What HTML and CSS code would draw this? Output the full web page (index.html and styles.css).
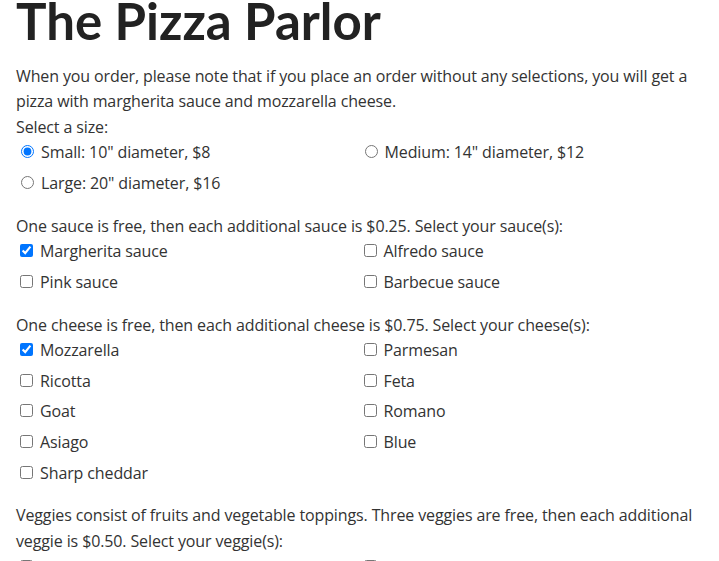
FILE: index.html
```html
<!DOCTYPE html>
<html lang="en">
<head>
<meta charset="utf-8">
<title>The Pizza Parlor</title>
<link rel="stylesheet" href="styles.css">
</head>
<body>
<h1 class="title">The Pizza Parlor</h1>
<form class="order">
  <p class="note">When you order, please note that if you place an order without any selections, you will get a pizza with margherita sauce and mozzarella cheese.</p>
  <section class="group group-first">
    <div class="prompt">Select a size:</div>
    <div class="options">
      <label class="option"><input type="radio" name="size" value="small" checked> Small: 10" diameter, $8</label>
      <label class="option"><input type="radio" name="size" value="medium"> Medium: 14" diameter, $12</label>
      <label class="option"><input type="radio" name="size" value="large"> Large: 20" diameter, $16</label>
    </div>
  </section>
  <section class="group">
    <div class="prompt">One sauce is free, then each additional sauce is $0.25. Select your sauce(s):</div>
    <div class="options">
      <label class="option"><input type="checkbox" name="sauce" value="margherita" checked> Margherita sauce</label>
      <label class="option"><input type="checkbox" name="sauce" value="alfredo"> Alfredo sauce</label>
      <label class="option"><input type="checkbox" name="sauce" value="pink"> Pink sauce</label>
      <label class="option"><input type="checkbox" name="sauce" value="barbecue"> Barbecue sauce</label>
    </div>
  </section>
  <section class="group">
    <div class="prompt">One cheese is free, then each additional cheese is $0.75. Select your cheese(s):</div>
    <div class="options">
      <label class="option"><input type="checkbox" name="cheese" value="mozzarella" checked> Mozzarella</label>
      <label class="option"><input type="checkbox" name="cheese" value="parmesan"> Parmesan</label>
      <label class="option"><input type="checkbox" name="cheese" value="ricotta"> Ricotta</label>
      <label class="option"><input type="checkbox" name="cheese" value="feta"> Feta</label>
      <label class="option"><input type="checkbox" name="cheese" value="goat"> Goat</label>
      <label class="option"><input type="checkbox" name="cheese" value="romano"> Romano</label>
      <label class="option"><input type="checkbox" name="cheese" value="asiago"> Asiago</label>
      <label class="option"><input type="checkbox" name="cheese" value="blue"> Blue</label>
      <label class="option"><input type="checkbox" name="cheese" value="cheddar"> Sharp cheddar</label>
    </div>
  </section>
  <section class="group">
    <div class="prompt">Veggies consist of fruits and vegetable toppings. Three veggies are free, then each additional veggie is $0.50. Select your veggie(s):</div>
    <div class="options">
      <label class="option"><input type="checkbox" name="veggie" value="tomatoes"> Tomatoes</label>
      <label class="option"><input type="checkbox" name="veggie" value="olives"> Olives</label>
      <label class="option"><input type="checkbox" name="veggie" value="peppers"> Peppers</label>
      <label class="option"><input type="checkbox" name="veggie" value="onions"> Onions</label>
    </div>
  </section>
</form>
</body>
</html>
```
FILE: styles.css
```css
body {
  margin: 0;
  padding: 0 16px;
  background: #ffffff;
  color: #333333;
  font-family: "Open Sans", "Noto Sans", sans-serif;
  font-size: 16px;
  line-height: 25.6px;
  letter-spacing: -0.12px;
}

.title {
  margin: 0 0 22.5px;
  font-family: Lato, "Open Sans", sans-serif;
  font-size: 51px;
  font-weight: 700;
  line-height: 41px;
  letter-spacing: 0;
  color: #222222;
}

.order {
  margin: 0;
}

.note {
  margin: 0;
}

.group {
  margin-top: 17.2px;
}

.group-first {
  margin-top: 0;
}

.options {
  display: grid;
  grid-template-columns: 1fr 1fr;
  row-gap: 5px;
}

.option {
  display: block;
}
```
